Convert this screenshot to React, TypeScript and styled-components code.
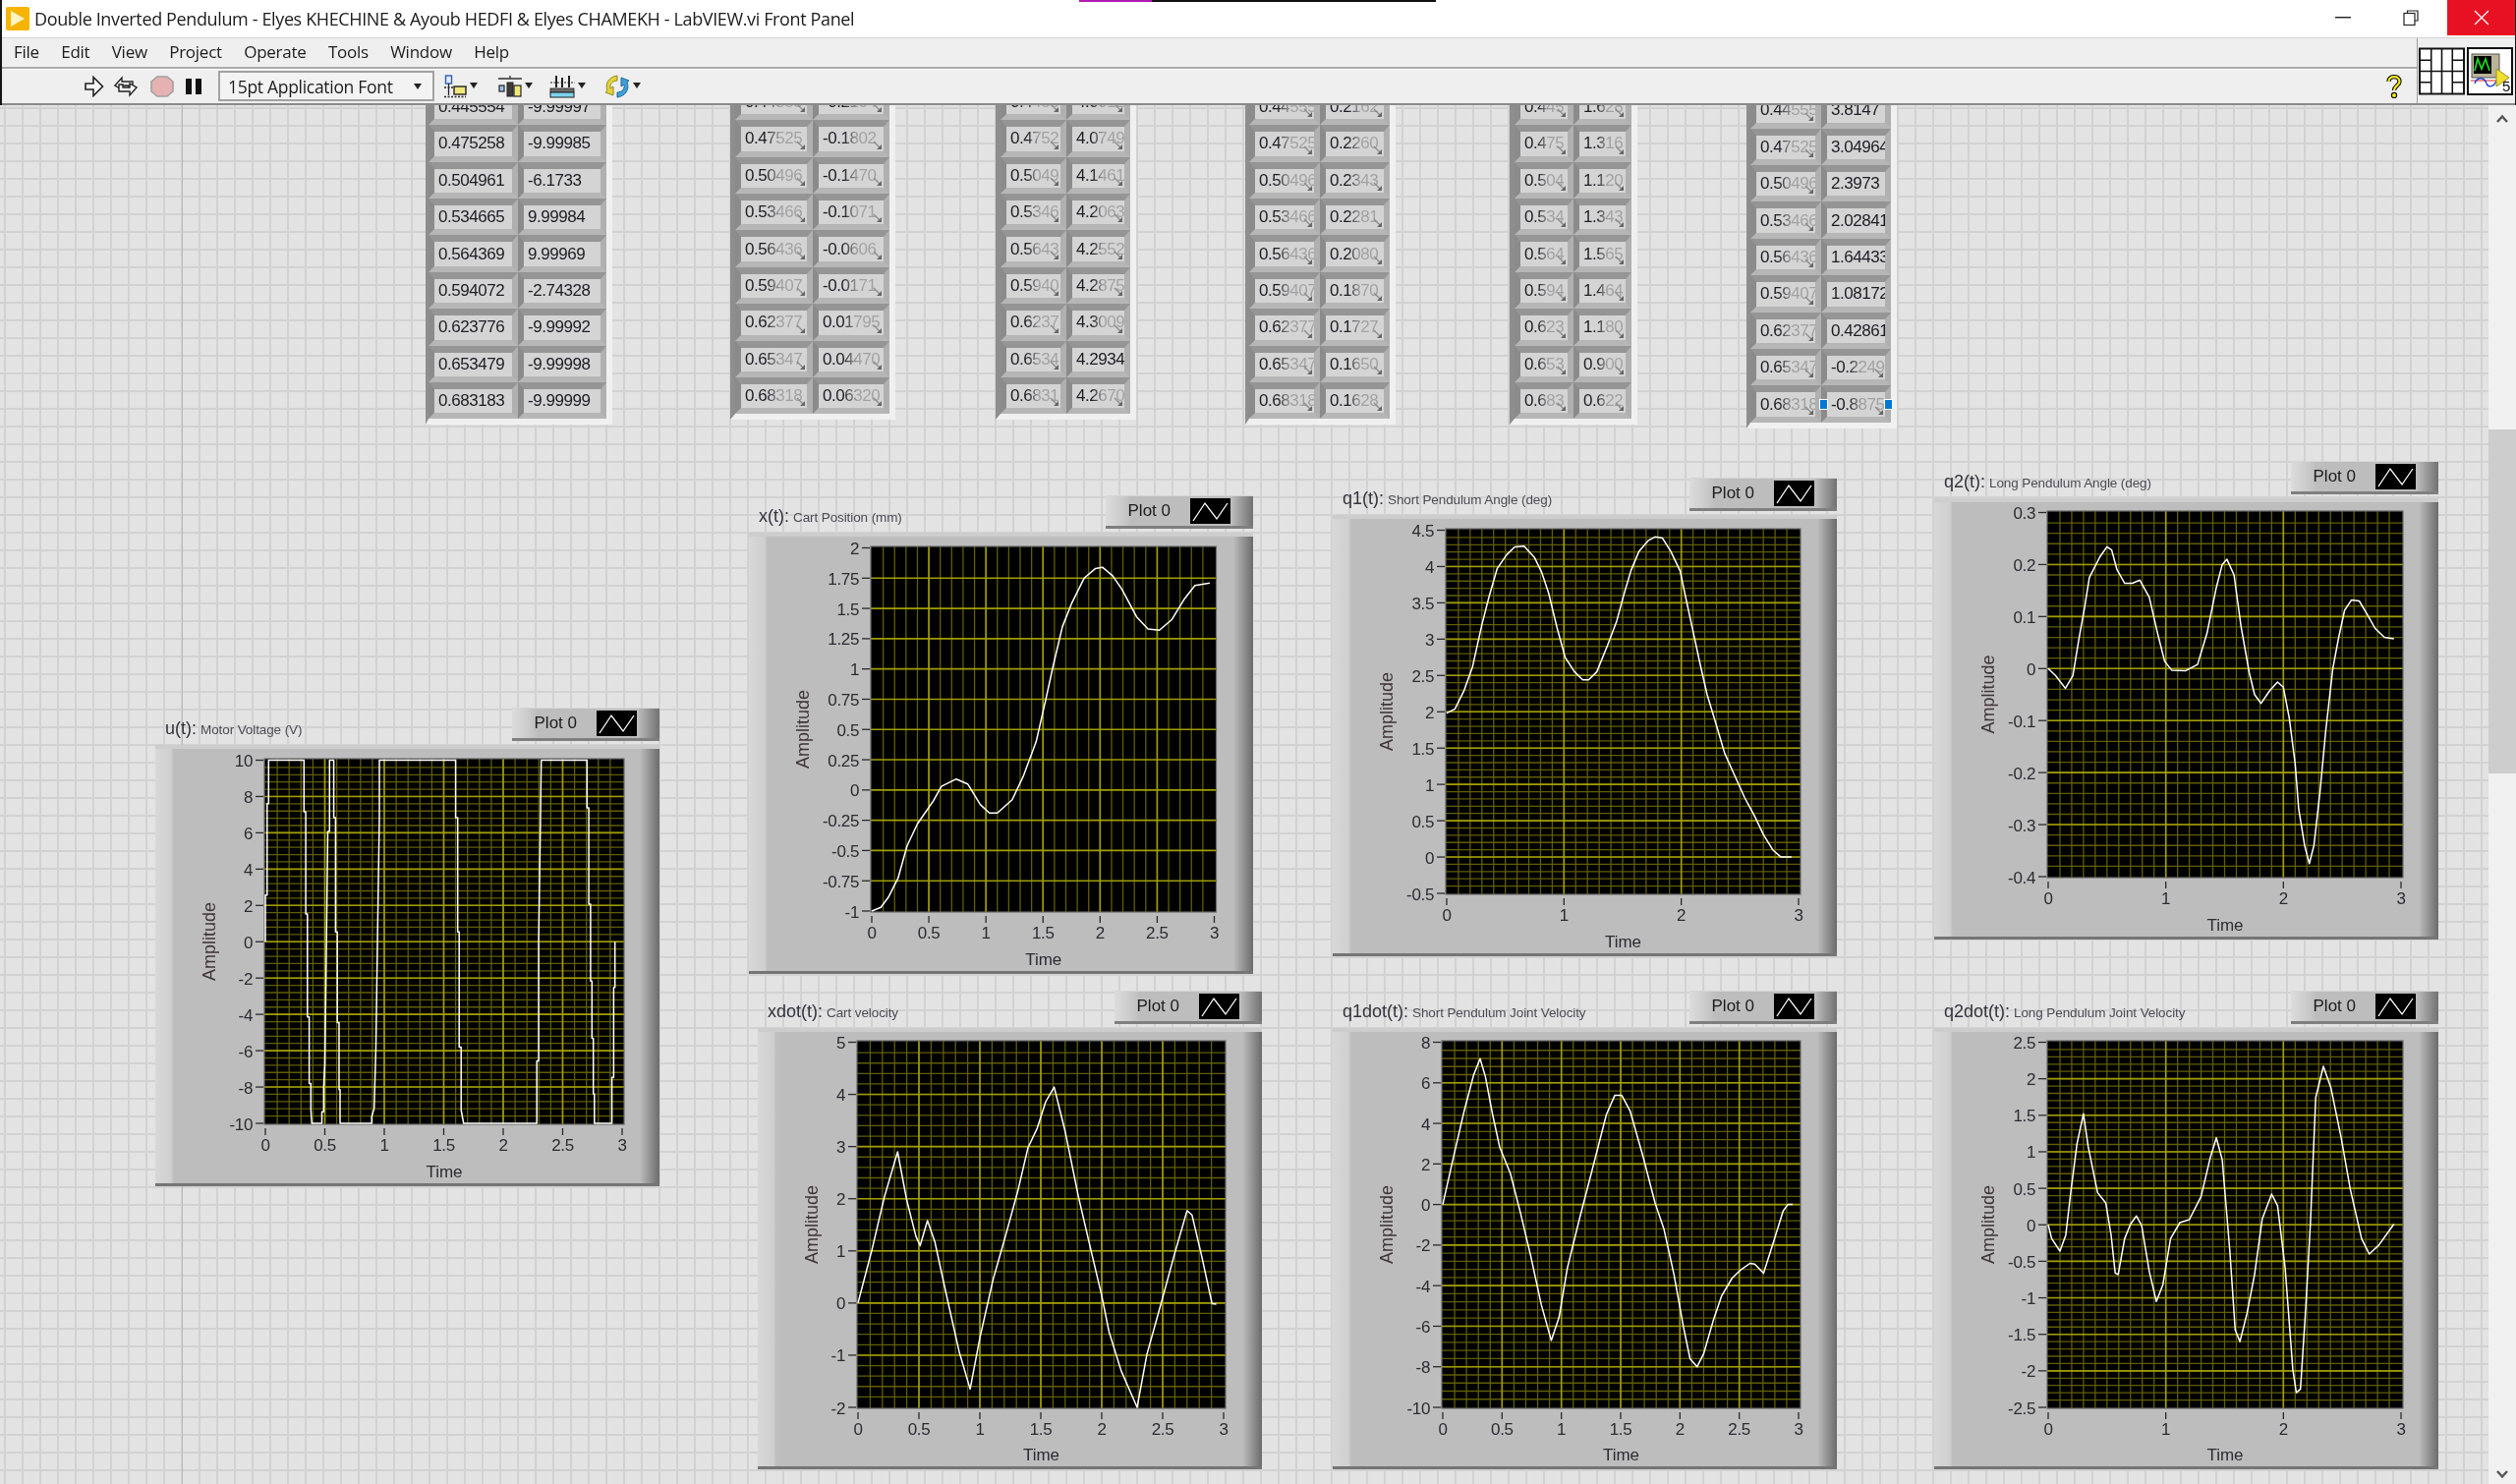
import styled, { createGlobalStyle } from 'styled-components';

const GlobalStyle = createGlobalStyle`
  html, body {
    margin: 0;
    padding: 0;
    background: #e2e2e2;
  }
`;

const UI_FONT = '"Liberation Sans", Arial, sans-serif';

const Page = styled.div`
  width: 2560px;
  height: 1510px;
  display: flex;
  flex-direction: column;
  overflow: hidden;
  font-family: ${UI_FONT};
  color: #1c1c1c;
  filter: blur(0.4px);
`;

const Chrome = styled.header`
  display: flex;
  flex-direction: column;
  flex: none;
  border-left: 2px solid #161616;
  border-right: 1px solid #161616;
`;

const TitleBar = styled.div`
  position: relative;
  height: 38px;
  display: flex;
  align-items: center;
  background: #fff;
  &::before {
    content: '';
    position: absolute;
    top: 0;
    left: 1096px;
    width: 363px;
    height: 2px;
    background: linear-gradient(90deg, #b01cb0 0 74px, #111 74px);
  }
`;

const AppIcon = styled.svg`
  width: 24px;
  height: 24px;
  margin: 0 5px 0 4px;
  flex: none;
`;

const TitleText = styled.div`
  font-family: 'Open Sans', sans-serif;
  font-size: 18px;
  letter-spacing: -0.37px;
  white-space: nowrap;
  flex: 1;
`;

const WindowButton = styled.div<{ $close?: boolean }>`
  width: 69px;
  height: 36px;
  align-self: flex-start;
  display: flex;
  align-items: center;
  justify-content: center;
  background: ${(p) => (p.$close ? '#e81123' : 'transparent')};
  margin-left: ${(p) => (p.$close ? '3px' : '0')};
`;

const BarRow = styled.div`
  display: flex;
  border-top: 1px solid #d2d2d2;
  border-bottom: 2px solid #8a8a8a;
  background: #efefef;
`;

const Bars = styled.div`
  flex: 1;
  display: flex;
  flex-direction: column;
`;

const MenuBar = styled.nav`
  height: 31px;
  box-sizing: border-box;
  display: flex;
  align-items: center;
  padding: 0 0 3px 12px;
  gap: 22.3px;
  font-family: 'Open Sans', sans-serif;
  font-size: 17px;
  letter-spacing: -0.25px;
  border-bottom: 2px solid #ababab;
  box-shadow: 0 1px 0 #fff;
`;

const Toolbar = styled.div`
  height: 35px;
  display: flex;
  align-items: center;
  padding-left: 84px;
`;

const Tool = styled.svg<{ $gap?: number }>`
  flex: none;
  margin-right: ${(p) => p.$gap ?? 0}px;
`;

const FontRing = styled.div`
  width: 220px;
  height: 31px;
  box-sizing: border-box;
  display: flex;
  align-items: center;
  justify-content: space-between;
  padding: 0 11px 0 8px;
  margin-right: 10px;
  background: #f3f3f3;
  border: 2px solid #a2a2a2;
  font-family: 'Open Sans', sans-serif;
  font-size: 17.5px;
  letter-spacing: -0.3px;
`;

const RingCaret = styled.span`
  width: 0;
  height: 0;
  border-left: 4px solid transparent;
  border-right: 4px solid transparent;
  border-top: 6px solid #222;
`;

const HelpSlot = styled.div`
  margin-left: auto;
  margin-right: 15px;
  display: flex;
`;

const Corner = styled.div`
  width: 100px;
  flex: none;
  display: flex;
  align-items: center;
  gap: 2px;
  padding-left: 1px;
  border-left: 1px solid #9c9c9c;
  box-sizing: border-box;
`;

const Workspace = styled.main`
  flex: 1;
  display: flex;
  min-height: 0;
`;

const Panel = styled.div`
  position: relative;
  flex: 1;
  overflow: hidden;
  background-color: #e3e3e3;
  background-image: linear-gradient(#b8b8b8, #b8b8b8), linear-gradient(90deg, #d2d2d2 2px, transparent 2px),
    linear-gradient(#d2d2d2 2px, transparent 2px);
  background-size: 1px 100%, 18px 18px, 18px 18px;
  background-position: 185px 0, 4px 0, 0 2px;
  background-repeat: no-repeat, repeat, repeat;
`;

const Scrollbar = styled.aside`
  width: 28px;
  flex: none;
  display: flex;
  flex-direction: column;
  align-items: center;
  background: #f1f1f1;
`;

const ScrollArrow = styled.svg<{ $bottom?: boolean }>`
  flex: none;
  margin: ${(p) => (p.$bottom ? 'auto 0 5px' : '9px 0 0')};
`;

const ScrollThumb = styled.div`
  width: 100%;
  height: 350px;
  margin-top: 311px;
  background: #cdcdcd;
`;

/* ---- cluster arrays on the front panel ---- */

const ArrayBox = styled.div<{ $x: number; $y: number; $cols: string; $edge: number }>`
  position: absolute;
  left: ${(p) => p.$x}px;
  top: ${(p) => p.$y}px;
  display: grid;
  grid-template-columns: ${(p) => p.$cols};
  grid-auto-rows: 37.4px;
  background: #a9a9a9;
  border-left: ${(p) => p.$edge}px solid #8e8e8e;
  border-right: 6px solid #f0f0f0;
  border-bottom: 6px solid #f0f0f0;
`;

const Cell = styled.div`
  position: relative;
  box-sizing: border-box;
  min-width: 0;
  border-style: solid;
  border-width: 7px 6px 6px 6px;
  border-color: #959595 #b0b0b0 #b6b6b6 #8b8b8b;
  background: #d4d4d4;
  display: flex;
  align-items: center;
  padding-left: 4px;
`;

const CellValue = styled.span`
  display: block;
  width: 100%;
  overflow: hidden;
  white-space: nowrap;
  font-size: 17px;
  line-height: 24px;
  letter-spacing: -0.45px;
  color: #1c1c24;
`;

const ClippedMark = styled.span`
  position: absolute;
  top: 0;
  bottom: 0;
  right: 0;
  width: 62%;
  max-width: 46px;
  background: linear-gradient(90deg, rgba(212, 212, 212, 0), rgba(212, 212, 212, 0.72) 35%);
  svg {
    position: absolute;
    right: 1px;
    bottom: 1px;
  }
`;

const SelectHandle = styled.span<{ $side: 'left' | 'right' }>`
  position: absolute;
  top: 50%;
  ${(p) => p.$side}: -8px;
  width: 7px;
  height: 9px;
  margin-top: -6px;
  background: #0078d7;
  border: 1.5px solid #fff;
`;

/* ---- waveform graphs ---- */

const GraphNode = styled.section<{ $x: number; $y: number }>`
  position: absolute;
  left: ${(p) => p.$x}px;
  top: ${(p) => p.$y}px;
  width: 513px;
`;

const GraphHeader = styled.div`
  height: 38px;
  display: flex;
  justify-content: space-between;
  align-items: flex-start;
`;

const GraphLabel = styled.div`
  margin: 11px 0 0 10px;
  line-height: 20px;
  font-size: 18px;
  color: #33333d;
  white-space: nowrap;
  small {
    font-size: 13.5px;
    color: #4b4b55;
    margin-left: 4px;
    letter-spacing: -0.1px;
  }
`;

const Legend = styled.div`
  width: 150px;
  height: 34px;
  box-sizing: border-box;
  display: flex;
  align-items: center;
  justify-content: flex-end;
  gap: 20px;
  padding-right: 23px;
  font-size: 17px;
  background: linear-gradient(90deg, #dcdcdc 0, #c9c9c9 18px, #bdbdbd 26px, #bdbdbd calc(100% - 22px), #717171 100%);
  border-top: 1px solid #d5d5d5;
  border-bottom: 3px solid #7f7f7f;
`;

const LegendSwatch = styled.svg`
  width: 41px;
  height: 26px;
  display: block;
  background: #000;
`;

const GraphFrame = styled.div`
  height: 449px;
  background: linear-gradient(90deg, #d8d8d8 0, #cfcfcf 16px, #bdbdbd 19px, #bdbdbd calc(100% - 20px), #6b6b6b 100%);
  box-shadow: inset 0 4px 0 #cdcdcd, inset 0 -3px 0 #757575;
  svg {
    display: block;
  }
`;

type Graph = {
  title: string;
  caption: string;
  x: number;
  y: number;
  plot: [number, number, number, number];
  yMin: number;
  yMax: number;
  yStep: number;
  xStep: number;
  yMinor: number;
  trace: number[];
};

const graphs: Graph[] = [
  {
    title: 'u(t):',
    caption: 'Motor Voltage (V)',
    x: 158,
    y: 757,
    plot: [111, 14, 366, 372],
    yMin: -10,
    yMax: 10,
    yStep: 2,
    xStep: 0.5,
    yMinor: 5,
    trace: [
      0, 0, 0, 2.57, 0.015, 2.57, 0.015, 7.6, 0.027, 7.6, 0.027, 10, 0.325, 10, 0.325, 7.16, 0.34, 7.16, 0.34, 1.53,
      0.354, 1.53, 0.354, -4.14, 0.369, -4.14, 0.369, -7.8, 0.383, -7.8, 0.383, -9.27, 0.39, -10, 0.475, -10, 0.475,
      -9.36, 0.49, -9.36, 0.49, -8, 0.5, -6.75, 0.51, -2.07, 0.525, 6.07, 0.54, 6.07, 0.54, 10, 0.575, 10, 0.575, 6.84,
      0.59, 6.84, 0.59, 0.54, 0.605, 0.54, 0.605, -4.46, 0.62, -4.46, 0.62, -8.15, 0.628, -8.15, 0.628, -10, 0.894, -10,
      0.894, -9.63, 0.915, -9.18, 0.93, -5.76, 0.944, 0.54, 0.959, 6.84, 0.959, 10, 1.6, 10, 1.6, 6.84, 1.617, 6.84,
      1.617, 0.54, 1.63, 0.54, 1.63, -5.8, 1.646, -5.8, 1.646, -9.27, 1.667, -10, 2.283, -10, 2.283, -6.57, 2.298,
      -6.57, 2.298, 0, 2.313, 6.66, 2.32, 10, 2.705, 10, 2.705, 7.38, 2.72, 7.38, 2.72, 2.07, 2.735, 2.07, 2.735, -2.16,
      2.746, -2.16, 2.746, -5.31, 2.758, -5.31, 2.758, -8.37, 2.767, -8.37, 2.767, -10, 2.914, -10, 2.914, -7.47, 2.929,
      -7.47, 2.929, -2.52, 2.94, -2.52, 2.94, 0,
    ],
  },
  {
    title: 'x(t):',
    caption: 'Cart Position (mm)',
    x: 762,
    y: 541,
    plot: [124, 14, 351.5, 372],
    yMin: -1,
    yMax: 2,
    yStep: 0.25,
    xStep: 0.5,
    yMinor: 1,
    trace: [
      0, -1, 0.08, -0.97, 0.15, -0.88, 0.23, -0.73, 0.31, -0.46, 0.4, -0.28, 0.54, -0.09, 0.61, 0.03, 0.74, 0.09, 0.84,
      0.05, 0.95, -0.12, 1.03, -0.19, 1.1, -0.19, 1.23, -0.08, 1.33, 0.12, 1.44, 0.4, 1.52, 0.73, 1.59, 1.03, 1.67,
      1.35, 1.75, 1.54, 1.86, 1.75, 1.96, 1.83, 2.02, 1.84, 2.11, 1.77, 2.19, 1.66, 2.32, 1.43, 2.42, 1.33, 2.52, 1.32,
      2.63, 1.41, 2.74, 1.58, 2.83, 1.69, 2.96, 1.71,
    ],
  },
  {
    title: 'q1(t):',
    caption: 'Short Pendulum Angle (deg)',
    x: 1356,
    y: 523,
    plot: [115, 14, 361, 372],
    yMin: -0.5,
    yMax: 4.5,
    yStep: 0.5,
    xStep: 1,
    yMinor: 5,
    trace: [
      0, 1.98, 0.07, 2.04, 0.15, 2.3, 0.22, 2.62, 0.3, 3.2, 0.36, 3.58, 0.43, 3.97, 0.51, 4.16, 0.58, 4.27, 0.66, 4.28,
      0.75, 4.12, 0.81, 3.92, 0.87, 3.63, 0.94, 3.16, 1.01, 2.75, 1.09, 2.55, 1.16, 2.44, 1.21, 2.44, 1.28, 2.55, 1.37,
      2.91, 1.45, 3.25, 1.51, 3.61, 1.57, 3.94, 1.64, 4.21, 1.72, 4.36, 1.78, 4.41, 1.84, 4.39, 1.91, 4.21, 1.99, 3.94,
      2.04, 3.56, 2.1, 3.11, 2.16, 2.66, 2.22, 2.24, 2.3, 1.81, 2.37, 1.43, 2.45, 1.14, 2.54, 0.82, 2.63, 0.55, 2.7,
      0.31, 2.78, 0.1, 2.85, 0, 2.94, 0,
    ],
  },
  {
    title: 'q2(t):',
    caption: 'Long Pendulum Angle (deg)',
    x: 1968,
    y: 506,
    plot: [115, 13, 362, 373],
    yMin: -0.4,
    yMax: 0.3,
    yStep: 0.1,
    xStep: 1,
    yMinor: 5,
    trace: [
      0, 0, 0.065, -0.014, 0.146, -0.038, 0.21, -0.014, 0.26, 0.055, 0.31, 0.118, 0.35, 0.175, 0.44, 0.215, 0.5, 0.234,
      0.54, 0.228, 0.585, 0.19, 0.65, 0.164, 0.715, 0.164, 0.78, 0.17, 0.86, 0.137, 0.93, 0.068, 0.99, 0.014, 1.05,
      -0.003, 1.17, -0.004, 1.27, 0.008, 1.35, 0.068, 1.43, 0.156, 1.48, 0.2, 1.52, 0.21, 1.58, 0.18, 1.64, 0.08, 1.71,
      -0.008, 1.755, -0.05, 1.81, -0.067, 1.885, -0.042, 1.95, -0.026, 2, -0.036, 2.05, -0.095, 2.1, -0.183, 2.13, -0.27,
      2.18, -0.34, 2.22, -0.375, 2.26, -0.34, 2.31, -0.24, 2.36, -0.12, 2.42, 0, 2.47, 0.06, 2.52, 0.112, 2.58, 0.132,
      2.645, 0.13, 2.71, 0.105, 2.78, 0.077, 2.86, 0.06, 2.94, 0.057,
    ],
  },
  {
    title: 'xdot(t):',
    caption: 'Cart velocity',
    x: 771,
    y: 1045,
    plot: [101, 13, 375, 374],
    yMin: -2,
    yMax: 5,
    yStep: 1,
    xStep: 0.5,
    yMinor: 5,
    trace: [
      0, 0, 0.115, 1.03, 0.216, 2.03, 0.325, 2.9, 0.4, 1.97, 0.475, 1.28, 0.51, 1.1, 0.57, 1.58, 0.63, 1.18, 0.73, 0.11,
      0.83, -0.93, 0.92, -1.65, 1, -0.67, 1.11, 0.46, 1.21, 1.28, 1.31, 2.13, 1.395, 2.98, 1.47, 3.35, 1.54, 3.86, 1.61,
      4.14, 1.7, 3.29, 1.81, 2.03, 1.91, 1.03, 2, 0.14, 2.06, -0.55, 2.16, -1.3, 2.29, -2, 2.37, -0.99, 2.49, 0.02, 2.6,
      0.96, 2.7, 1.77, 2.74, 1.69, 2.82, 0.9, 2.905, -0.01, 2.94, -0.02,
    ],
  },
  {
    title: 'q1dot(t):',
    caption: 'Short Pendulum Joint Velocity',
    x: 1356,
    y: 1045,
    plot: [111, 13, 365, 374],
    yMin: -10,
    yMax: 8,
    yStep: 2,
    xStep: 0.5,
    yMinor: 5,
    trace: [
      0, 0, 0.09, 2.34, 0.18, 4.6, 0.26, 6.38, 0.315, 7.19, 0.36, 6.3, 0.42, 4.44, 0.48, 2.83, 0.57, 1.53, 0.655, -0.4,
      0.74, -2.5, 0.83, -4.93, 0.915, -6.7, 0.98, -5.57, 1.05, -3.15, 1.155, -0.65, 1.26, 1.7, 1.38, 4.44, 1.45, 5.38,
      1.51, 5.38, 1.58, 4.6, 1.69, 2.34, 1.79, 0.08, 1.865, -1.2, 1.95, -3.47, 2.03, -6.06, 2.085, -7.6, 2.145, -8, 2.2,
      -7.35, 2.28, -5.74, 2.35, -4.52, 2.44, -3.63, 2.51, -3.23, 2.59, -2.9, 2.63, -2.94, 2.705, -3.39, 2.78, -2, 2.87,
      -0.32, 2.91, 0, 2.95, 0,
    ],
  },
  {
    title: 'q2dot(t):',
    caption: 'Long Pendulum Joint Velocity',
    x: 1968,
    y: 1045,
    plot: [115, 13, 362, 374],
    yMin: -2.5,
    yMax: 2.5,
    yStep: 0.5,
    xStep: 1,
    yMinor: 5,
    trace: [
      0, 0, 0.03, -0.19, 0.1, -0.36, 0.15, -0.14, 0.195, 0.48, 0.245, 1.11, 0.3, 1.52, 0.34, 1.07, 0.42, 0.44, 0.49, 0.3,
      0.535, -0.14, 0.57, -0.66, 0.595, -0.68, 0.65, -0.19, 0.7, 0.01, 0.75, 0.12, 0.795, -0.01, 0.86, -0.64, 0.92,
      -1.05, 0.975, -0.82, 1.04, -0.19, 1.12, 0.03, 1.2, 0.07, 1.3, 0.39, 1.38, 0.93, 1.43, 1.19, 1.48, 0.89, 1.545,
      -0.37, 1.59, -1.44, 1.63, -1.6, 1.69, -1.22, 1.755, -0.68, 1.82, 0.08, 1.9, 0.42, 1.95, 0.26, 2.015, -0.59, 2.08,
      -1.98, 2.11, -2.3, 2.145, -2.25, 2.19, -1.13, 2.23, 0.04, 2.275, 1.74, 2.34, 2.17, 2.405, 1.87, 2.49, 1.2, 2.57,
      0.48, 2.665, -0.19, 2.73, -0.4, 2.81, -0.28, 2.94, 0.01,
    ],
  },
];

const TIMES = ['0.445554', '0.475258', '0.504961', '0.534665', '0.564369', '0.594072', '0.623776', '0.653479', '0.683183'];
const ALL_ROWS = [0, 1, 2, 3, 4, 5, 6, 7, 8];

type ClusterArray = {
  x: number;
  y: number;
  edge: number;
  cols: string;
  timeChars: number;
  values: string[];
  plainTimes?: boolean;
  plain?: number[];
  selected?: boolean;
};

const arrays: ClusterArray[] = [
  {
    x: 433,
    y: 88.9,
    edge: 3,
    cols: '91px 90px',
    timeChars: 8,
    values: ['-9.99997', '-9.99985', '-6.1733', '9.99984', '9.99969', '-2.74328', '-9.99992', '-9.99998', '-9.99999'],
    plainTimes: true,
    plain: ALL_ROWS,
  },
  {
    x: 743,
    y: 83.9,
    edge: 5,
    cols: '79px 78px',
    timeChars: 7,
    values: ['-0.2104', '-0.1802', '-0.1470', '-0.1071', '-0.0606', '-0.0171', '0.01795', '0.04470', '0.06320'],
  },
  {
    x: 1013,
    y: 83.9,
    edge: 5,
    cols: '67px 65px',
    timeChars: 6,
    values: ['4.0012', '4.0749', '4.1461', '4.2063', '4.2552', '4.2875', '4.3009', '4.2934', '4.2670'],
    plain: [7],
  },
  {
    x: 1267,
    y: 88.9,
    edge: 4,
    cols: '72px 71px',
    timeChars: 7,
    values: ['0.2162', '0.2260', '0.2343', '0.2281', '0.2080', '0.1870', '0.1727', '0.1650', '0.1628'],
  },
  {
    x: 1536,
    y: 88.9,
    edge: 5,
    cols: '60px 59px',
    timeChars: 5,
    values: ['1.628', '1.316', '1.120', '1.343', '1.565', '1.464', '1.180', '0.900', '0.622'],
  },
  {
    x: 1777,
    y: 92.2,
    edge: 4,
    cols: '72px 71px',
    timeChars: 7,
    values: ['3.8147', '3.04964', '2.3973', '2.02841', '1.64433', '1.08172', '0.42861', '-0.2249', '-0.8875'],
    plain: [0, 1, 2, 3, 4, 5, 6],
    selected: true,
  },
];

const PANEL_TOP = 106;

function ticks(min: number, max: number, step: number) {
  const out: number[] = [];
  const count = Math.round((max - min) / step);
  for (let i = 0; i <= count; i++) out.push(parseFloat((min + i * step).toFixed(3)));
  return out;
}

function GraphChart({ graph }: { graph: Graph }) {
  const [left, top, width, height] = graph.plot;
  const px = (t: number) => left + 1 + (t / 3) * (width - 3);
  const py = (v: number) => top + 1.5 + ((graph.yMax - v) / (graph.yMax - graph.yMin)) * (height - 2.5);
  const bottom = top + height;

  const xMajor = ticks(0, 3, graph.xStep);
  const yMajor = ticks(graph.yMin, graph.yMax, graph.yStep);
  const xMinor = ticks(0, 3, 0.1).slice(1, -1);
  const yMinor = graph.yMinor > 1 ? ticks(graph.yMin, graph.yMax, graph.yStep / graph.yMinor).slice(1, -1) : [];

  const points: string[] = [];
  for (let i = 0; i < graph.trace.length; i += 2) {
    points.push(`${px(graph.trace[i]).toFixed(1)},${py(graph.trace[i + 1]).toFixed(1)}`);
  }

  return (
    <svg width="513" height="449" fontFamily={UI_FONT}>
      <rect x={left} y={top} width={width} height={height} fill="#000" />
      <g stroke="#605e00" strokeWidth="1.3">
        {xMinor.map((t) => (
          <line key={t} x1={px(t)} x2={px(t)} y1={top} y2={bottom} />
        ))}
        {yMinor.map((v) => (
          <line key={v} y1={py(v)} y2={py(v)} x1={left} x2={left + width} />
        ))}
      </g>
      <g stroke="#a09d00" strokeWidth="1.6">
        {xMajor.slice(1, -1).map((t) => (
          <line key={t} x1={px(t)} x2={px(t)} y1={top} y2={bottom} />
        ))}
        {yMajor.slice(1, -1).map((v) => (
          <line key={v} y1={py(v)} y2={py(v)} x1={left} x2={left + width} />
        ))}
      </g>
      <rect x={left} y={top} width={width} height={height} fill="none" stroke="#6a6a6a" strokeWidth="1.2" />
      <polyline points={points.join(' ')} fill="none" stroke="#fff" strokeWidth="1.5" strokeLinejoin="round" />

      <g stroke="#2a2a2a" strokeWidth="1.3">
        {yMajor.map((v) => (
          <line key={v} y1={py(v)} y2={py(v)} x1={left - 9} x2={left - 1} />
        ))}
        {xMajor.map((t) => (
          <line key={t} x1={px(t)} x2={px(t)} y1={bottom + 4} y2={bottom + 11} />
        ))}
      </g>
      <g fontSize="17" fill="#2b2b33" letterSpacing="-0.35">
        {yMajor.map((v) => (
          <text key={v} x={left - 12} y={py(v) + 6.5} textAnchor="end">
            {v}
          </text>
        ))}
        {xMajor.map((t) => (
          <text key={t} x={px(t)} y={bottom + 27} textAnchor="middle">
            {t}
          </text>
        ))}
      </g>
      <text x={left + width / 2} y={440} textAnchor="middle" fontSize="17" fill="#2b2b33">
        Time
      </text>
      <text
        transform={`translate(61 ${top + height / 2}) rotate(-90)`}
        textAnchor="middle"
        fontSize="18"
        fill="#40343a"
      >
        Amplitude
      </text>
    </svg>
  );
}

function ResizeArrow() {
  return (
    <svg width="10" height="10" viewBox="0 0 10 10">
      <path d="M1 1 L8 8" stroke="#8a8a8a" strokeWidth="1.2" />
      <path d="M9 4 V9 H4 Z" fill="#666" />
    </svg>
  );
}

function ArrayCell({ value, clipped, selected }: { value: string; clipped: boolean; selected?: boolean }) {
  return (
    <Cell>
      <CellValue>{value}</CellValue>
      {clipped && (
        <ClippedMark>
          <ResizeArrow />
        </ClippedMark>
      )}
      {selected && (
        <>
          <SelectHandle $side="left" />
          <SelectHandle $side="right" />
        </>
      )}
    </Cell>
  );
}

function Caret({ x, y }: { x: number; y: number }) {
  return <path d={`M${x} ${y} h8 l-4 6 Z`} fill="#222" />;
}

export default function App() {
  return (
    <Page>
      <GlobalStyle />
      <Chrome>
        <TitleBar>
          <AppIcon viewBox="0 0 24 24">
            <rect width="24" height="24" rx="2" fill="#f6b400" />
            <path d="M5 4 L19 12 L5 20 Z" fill="#fff2c4" />
          </AppIcon>
          <TitleText>
            Double Inverted Pendulum - Elyes KHECHINE &amp; Ayoub HEDFI &amp; Elyes CHAMEKH - LabVIEW.vi Front Panel
          </TitleText>
          <WindowButton>
            <svg width="16" height="2">
              <rect width="16" height="1.4" fill="#222" />
            </svg>
          </WindowButton>
          <WindowButton>
            <svg width="16" height="16" viewBox="0 0 16 16">
              <path d="M4.5 3.5 V1 H15 V11 H12" fill="none" stroke="#222" strokeWidth="1.2" />
              <rect x="1" y="3.5" width="11" height="12" fill="#fff" stroke="#222" strokeWidth="1.2" />
            </svg>
          </WindowButton>
          <WindowButton $close>
            <svg width="16" height="16" viewBox="0 0 16 16">
              <path d="M1 1 L15 15 M15 1 L1 15" stroke="#fff" strokeWidth="1.3" />
            </svg>
          </WindowButton>
        </TitleBar>
        <BarRow>
          <Bars>
            <MenuBar>
              <span>File</span>
              <span>Edit</span>
              <span>View</span>
              <span>Project</span>
              <span>Operate</span>
              <span>Tools</span>
              <span>Window</span>
              <span>Help</span>
            </MenuBar>
            <Toolbar>
              <Tool width="20" height="22" viewBox="0 0 20 22" $gap={9}>
                <path d="M1 8 H9 V1.5 L18.5 11 L9 20.5 V14 H1 Z" fill="#f6f6f6" stroke="#222" strokeWidth="1.6" />
              </Tool>
              <Tool width="26" height="22" viewBox="0 0 26 22" $gap={12}>
                <path d="M2 10 L9 2 V6 H20 V13 H16 V10 H9 V14 Z" fill="#f6f6f6" stroke="#222" strokeWidth="1.4" />
                <path d="M24 12 L17 20 V16 H6 V9 H10 V12 H17 V8 Z" fill="#f6f6f6" stroke="#222" strokeWidth="1.4" />
              </Tool>
              <Tool width="24" height="22" viewBox="0 0 24 22" $gap={12}>
                <path d="M7 1 H17 L23 6 V16 L17 21 H7 L1 16 V6 Z" fill="#e6b1b1" stroke="#a0a0a0" strokeWidth="1.6" />
              </Tool>
              <Tool width="16" height="16" viewBox="0 0 16 16" $gap={17}>
                <rect width="6" height="16" fill="#111" />
                <rect x="10" width="6" height="16" fill="#111" />
              </Tool>
              <FontRing>
                15pt Application Font
                <RingCaret />
              </FontRing>
              <Tool width="36" height="24" viewBox="0 0 36 24" $gap={18}>
                <rect x="1.5" y="1" width="6" height="8" fill="#e6eefb" stroke="#2a5fb0" strokeWidth="1.4" />
                <path d="M0 13 H22" stroke="#222" strokeWidth="1.5" strokeDasharray="2 1.5" />
                <path d="M4.5 9 V21" stroke="#222" strokeWidth="1.3" />
                <rect x="10" y="12" width="12" height="8" fill="#f1e77a" stroke="#222" strokeWidth="1.4" />
                <path d="M0 22.5 H22" stroke="#222" strokeWidth="1.5" strokeDasharray="2 1.5" />
                <Caret x={26} y={8} />
              </Tool>
              <Tool width="36" height="24" viewBox="0 0 36 24" $gap={17}>
                <path d="M1 4 H25 M13 1 V4" stroke="#333" strokeWidth="1.3" />
                <rect x="2" y="11" width="5" height="6" fill="#9fc4ea" stroke="#222" strokeWidth="1.2" />
                <rect x="10" y="8" width="6" height="14" fill="#3c3c3c" stroke="#222" strokeWidth="1" />
                <rect x="17" y="11" width="7" height="11" fill="#f1e77a" stroke="#222" strokeWidth="1.2" />
                <Caret x={28} y={8} />
              </Tool>
              <Tool width="37" height="24" viewBox="0 0 37 24" $gap={19}>
                <path d="M7 1 V13 M13 3 V13 M20 1 V13" stroke="#222" strokeWidth="2" />
                <path d="M1 8 H26" stroke="#222" strokeWidth="1.2" strokeDasharray="2 1.5" />
                <rect x="1" y="14" width="24" height="4" fill="#6b6b6b" stroke="#222" strokeWidth="0.8" />
                <rect x="1" y="18" width="24" height="5" fill="#7fd3ee" stroke="#222" strokeWidth="1" />
                <Caret x={29} y={8} />
              </Tool>
              <Tool width="38" height="24" viewBox="0 0 38 24">
                <path d="M13 1 C5 2 0 9 3 16 L1 18 L9 21 L9 12 L6 14 C5 10 8 6 13 6 Z" fill="#e6d23a" stroke="#8f8a20" />
                <path d="M13 23 C21 22 26 15 23 8 L25 6 L17 3 L17 12 L20 10 C21 14 18 18 13 18 Z" fill="#3f9fd8" stroke="#1e6a9c" />
                <Caret x={29} y={8} />
              </Tool>
              <HelpSlot>
                <svg width="16" height="24" viewBox="0 0 16 24">
                  <path d="M2.5 7 C2.5 0.5 13.5 0.5 13.5 7 C13.5 11 8 11.5 8 16" fill="none" stroke="#111" strokeWidth="4.4" />
                  <path d="M2.5 7 C2.5 0.5 13.5 0.5 13.5 7 C13.5 11 8 11.5 8 16" fill="none" stroke="#f4ee1a" strokeWidth="2.2" />
                  <circle cx="8" cy="21" r="2.6" fill="#f4ee1a" stroke="#111" strokeWidth="1.2" />
                </svg>
              </HelpSlot>
            </Toolbar>
          </Bars>
          <Corner>
            <svg width="47" height="49" viewBox="0 0 48 49">
              <rect x="1" y="1" width="46" height="47" fill="#fff" stroke="#111" strokeWidth="2" />
              <path d="M13 1 V48 M24 1 V48 M35 1 V48" stroke="#111" strokeWidth="1.6" />
              <path d="M1 13 H13 M1 24.5 H13 M1 36 H13 M35 13 H47 M35 24.5 H47 M35 36 H47 M13 24.5 H35" stroke="#111" strokeWidth="1.6" />
            </svg>
            <svg width="47" height="49" viewBox="0 0 47 49" fontFamily={UI_FONT}>
              <rect x="1" y="1" width="45" height="47" fill="#fff" stroke="#111" strokeWidth="2" />
              <rect x="5" y="7" width="28" height="24" fill="#b9b49a" stroke="#555" />
              <rect x="7" y="9" width="18" height="18" fill="#000" />
              <path d="M8 24 L11 12 L15 22 L19 12 L23 24" fill="none" stroke="#19d426" strokeWidth="1.8" />
              <path d="M4 34 H40" stroke="#e02020" strokeWidth="1.2" />
              <path d="M8 37 C10 30 18 30 20 37 C22 42 28 40 30 34" fill="none" stroke="#2040d0" strokeWidth="1.4" />
              <path d="M30 22 L43 31 L30 40 Z" fill="#f0e030" stroke="#9a9420" />
              <text x="36" y="45" fontSize="15" fill="#111">
                5
              </text>
            </svg>
          </Corner>
        </BarRow>
      </Chrome>

      <Workspace>
        <Panel>
          {arrays.map((arr) => (
            <ArrayBox key={arr.x} $x={arr.x} $y={arr.y - PANEL_TOP} $cols={arr.cols} $edge={arr.edge}>
              {TIMES.flatMap((time, row) => [
                <ArrayCell key={`t${row}`} value={time.slice(0, arr.timeChars)} clipped={!arr.plainTimes} />,
                <ArrayCell
                  key={`v${row}`}
                  value={arr.values[row]}
                  clipped={!(arr.plain ?? []).includes(row)}
                  selected={arr.selected && row === 8}
                />,
              ])}
            </ArrayBox>
          ))}

          {graphs.map((graph) => (
            <GraphNode key={graph.title} $x={graph.x} $y={graph.y - 38 - PANEL_TOP}>
              <GraphHeader>
                <GraphLabel>
                  {graph.title}
                  <small>{graph.caption}</small>
                </GraphLabel>
                <Legend>
                  Plot 0
                  <LegendSwatch viewBox="0 0 41 26">
                    <path d="M3 23 L15 5 L27 21 L38 5" fill="none" stroke="#fff" strokeWidth="1.3" />
                  </LegendSwatch>
                </Legend>
              </GraphHeader>
              <GraphFrame>
                <GraphChart graph={graph} />
              </GraphFrame>
            </GraphNode>
          ))}
        </Panel>
        <Scrollbar>
          <ScrollArrow width="14" height="10" viewBox="0 0 14 10">
            <path d="M2 8 L7 2.5 L12 8" fill="none" stroke="#555" strokeWidth="2.4" />
          </ScrollArrow>
          <ScrollThumb />
          <ScrollArrow $bottom width="14" height="10" viewBox="0 0 14 10">
            <path d="M2 2 L7 7.5 L12 2" fill="none" stroke="#555" strokeWidth="2.4" />
          </ScrollArrow>
        </Scrollbar>
      </Workspace>
    </Page>
  );
}
